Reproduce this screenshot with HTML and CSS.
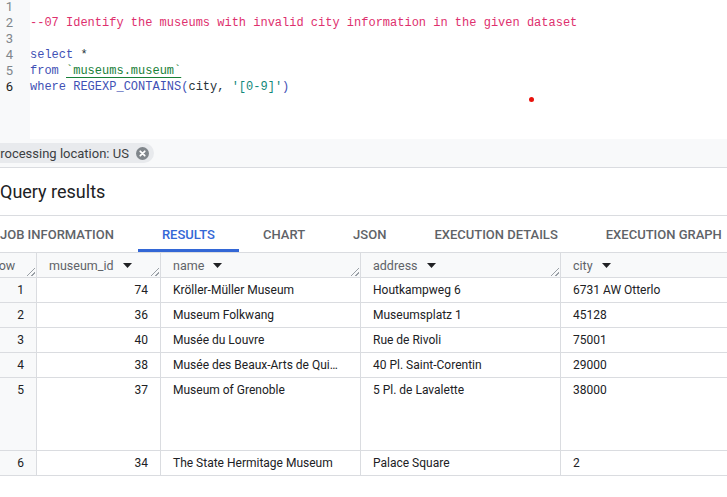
FILE: index.html
```html
<!DOCTYPE html>
<html>
<head>
<meta charset="utf-8">
<link rel="stylesheet" href="styles.css">
</head>
<body>
<div class="editor">
  <div class="gutter">
    <div>1</div><div>2</div><div>3</div><div>4</div><div>5</div><div class="active">6</div>
  </div>
  <div class="code">
    <div class="line">&nbsp;</div>
    <div class="line"><span class="cm">--07 Identify the museums with invalid city information in the given dataset</span></div>
    <div class="line">&nbsp;</div>
    <div class="line"><span class="kw">select</span> <span class="op">*</span></div>
    <div class="line"><span class="kw">from</span> <span class="tbl">`museums.museum`</span></div>
    <div class="line"><span class="kw">where</span> <span class="kw">REGEXP_CONTAINS</span><span class="kw">(</span><span class="op">city,</span> <span class="str">'[0-9]'</span><span class="kw">)</span></div>
    <span class="dot"></span>
  </div>
</div>
<div class="statusbar">
  <div class="chip">
    <span>Processing location: US</span>
    <svg class="chip-x" width="13" height="13" viewBox="0 0 14 14"><circle cx="7" cy="7" r="7" fill="#80868b"/><path d="M4.6 4.6 L9.4 9.4 M9.4 4.6 L4.6 9.4" stroke="#fff" stroke-width="1.9" stroke-linecap="round"/></svg>
  </div>
</div>
<div class="title">Query results</div>
<div class="tabs">
  <div class="tab">JOB INFORMATION</div>
  <div class="tab selected">RESULTS</div>
  <div class="tab">CHART</div>
  <div class="tab">JSON</div>
  <div class="tab">EXECUTION DETAILS</div>
  <div class="tab">EXECUTION GRAPH</div>
</div>
<div class="grid">
  <div class="h rn">Row<i class="rs"></i></div>
  <div class="h">museum_id<svg class="tri" width="9" height="5" viewBox="0 0 9 5"><path d="M0 0H9L4.5 5Z" fill="#202124"/></svg><i class="rs"></i></div>
  <div class="h">name<svg class="tri" width="9" height="5" viewBox="0 0 9 5"><path d="M0 0H9L4.5 5Z" fill="#202124"/></svg><i class="rs"></i></div>
  <div class="h">address<svg class="tri" width="9" height="5" viewBox="0 0 9 5"><path d="M0 0H9L4.5 5Z" fill="#202124"/></svg><i class="rs"></i></div>
  <div class="h">city<svg class="tri" width="9" height="5" viewBox="0 0 9 5"><path d="M0 0H9L4.5 5Z" fill="#202124"/></svg></div>

  <div class="c rn">1</div><div class="c num">74</div><div class="c">Kröller-Müller Museum</div><div class="c">Houtkampweg 6</div><div class="c">6731 AW Otterlo</div>
  <div class="c rn">2</div><div class="c num">36</div><div class="c">Museum Folkwang</div><div class="c">Museumsplatz 1</div><div class="c">45128</div>
  <div class="c rn">3</div><div class="c num">40</div><div class="c">Musée du Louvre</div><div class="c">Rue de Rivoli</div><div class="c">75001</div>
  <div class="c rn">4</div><div class="c num">38</div><div class="c ell">Musée des Beaux-Arts de Quimper</div><div class="c">40 Pl. Saint-Corentin</div><div class="c">29000</div>
  <div class="c rn tall">5</div><div class="c num tall">37</div><div class="c tall">Museum of Grenoble</div><div class="c tall">5 Pl. de Lavalette</div><div class="c tall">38000</div>
  <div class="c rn">6</div><div class="c num">34</div><div class="c">The State Hermitage Museum</div><div class="c">Palace Square</div><div class="c">2</div>
</div>
</body>
</html>
```

FILE: styles.css
```css
html, body {
  margin: 0;
  padding: 0;
}
body {
  width: 727px;
  height: 497px;
  overflow: hidden;
  background: #fff;
  font-family: Roboto, "Liberation Sans", sans-serif;
  color: #202124;
}

/* editor */
.editor {
  display: flex;
  height: 140px;
  margin-top: -1px;
}
.gutter {
  width: 30px;
  background: #f8f9fa;
  box-sizing: border-box;
  padding-right: 17px;
  text-align: right;
  font-size: 13px;
  line-height: 16px;
  color: #80868b;
}
.gutter .active {
  color: #202124;
}
.code {
  flex: 1;
  position: relative;
  font-family: "Liberation Mono", "DejaVu Sans Mono", monospace;
  font-size: 12px;
  line-height: 16px;
  color: #37474f;
}
.line {
  white-space: pre;
  height: 16px;
}
.cm { color: #de2f6e; }
.kw { color: #3f51b5; }
.op { color: #263238; }
.tbl {
  color: #188038;
  text-decoration: underline;
  text-decoration-color: #188038;
  text-underline-offset: 3px;
}
.str { color: #12887a; }
.dot {
  position: absolute;
  left: 499px;
  top: 98px;
  width: 5px;
  height: 5px;
  border-radius: 50%;
  background: #e8120c;
}

/* status bar */
.statusbar {
  height: 28px;
  background: #f8f9fa;
  border-bottom: 1px solid #dadce0;
  display: flex;
  align-items: center;
}
.chip {
  display: flex;
  align-items: center;
  gap: 7px;
  height: 20px;
  margin-left: -20px;
  padding: 0 5px 0 12px;
  background: #e8eaed;
  border-radius: 10px;
  font-size: 13px;
  color: #3c4043;
}
.chip-x { display: block; }

/* title */
.title {
  height: 48px;
  box-sizing: border-box;
  border-bottom: 1px solid #dadce0;
  display: flex;
  align-items: center;
  font-size: 18px;
  color: #202124;
}

/* tabs */
.tabs {
  display: flex;
  height: 36px;
  margin-left: -24px;
  white-space: nowrap;
}
.tab {
  padding: 3px 24px 0;
  font-size: 13px;
  font-weight: 500;
  color: #5f6368;
  display: flex;
  align-items: center;
  box-sizing: border-box;
  border-bottom: 3px solid transparent;
}
.tab.selected {
  color: #3367d6;
  border-bottom-color: #3367d6;
}

/* grid */
.grid {
  display: grid;
  grid-template-columns: 58px 124px 200px 200px 200px;
  margin-left: -21px;
  border-top: 1px solid #dadce0;
  width: max-content;
}
.h, .c {
  box-sizing: border-box;
  height: 25px;
  border-right: 1px solid #dadce0;
  border-bottom: 1px solid #dadce0;
  padding: 0 12px;
  font-size: 12px;
  white-space: nowrap;
  overflow: hidden;
}
.h {
  position: relative;
  background: #f8f9fa;
  color: #5f6368;
  font-size: 12.5px;
  display: flex;
  align-items: center;
}
.tri {
  margin-left: 9px;
  display: block;
}
.rs {
  position: absolute;
  right: 1px;
  bottom: 1px;
  width: 8px;
  height: 8px;
  background:
    linear-gradient(135deg, transparent 46%, #9aa0a6 46%, #9aa0a6 56%, transparent 56%, transparent 72%, #9aa0a6 72%, #9aa0a6 82%, transparent 82%);
}
.c {
  padding-top: 1px;
  line-height: 23px;
}
.c.rn {
  background: #f8f9fa;
  text-align: right;
}
.c.num {
  text-align: right;
}
.c.ell {
  text-overflow: ellipsis;
}
.c.tall {
  height: 73px;
}
```
